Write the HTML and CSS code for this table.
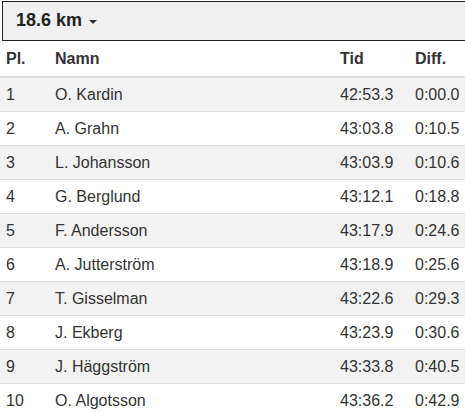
FILE: index.html
```html
<!DOCTYPE html>
<html lang="sv">
<head>
    <meta charset="UTF-8">
    <title>Resultat 18.6 km</title>
    <link rel="stylesheet" href="styles.css">
</head>
<body>
    <div class="results">
        <button class="dist-toggle">18.6 km <span class="caret"></span></button>

        <table class="result-table">
            <thead>
                <tr>
                    <th class="col-pl">Pl.</th>
                    <th class="col-name">Namn</th>
                    <th class="col-time">Tid</th>
                    <th class="col-diff">Diff.</th>
                </tr>
            </thead>
            <tbody>
                <tr><td>1</td><td>O. Kardin</td><td>42:53.3</td><td>0:00.0</td></tr>
                <tr><td>2</td><td>A. Grahn</td><td>43:03.8</td><td>0:10.5</td></tr>
                <tr><td>3</td><td>L. Johansson</td><td>43:03.9</td><td>0:10.6</td></tr>
                <tr><td>4</td><td>G. Berglund</td><td>43:12.1</td><td>0:18.8</td></tr>
                <tr><td>5</td><td>F. Andersson</td><td>43:17.9</td><td>0:24.6</td></tr>
                <tr><td>6</td><td>A. Jutterström</td><td>43:18.9</td><td>0:25.6</td></tr>
                <tr><td>7</td><td>T. Gisselman</td><td>43:22.6</td><td>0:29.3</td></tr>
                <tr><td>8</td><td>J. Ekberg</td><td>43:23.9</td><td>0:30.6</td></tr>
                <tr><td>9</td><td>J. Häggström</td><td>43:33.8</td><td>0:40.5</td></tr>
                <tr><td>10</td><td>O. Algotsson</td><td>43:36.2</td><td>0:42.9</td></tr>
            </tbody>
        </table>
    </div>
</body>
</html>
```

FILE: styles.css
```css
body {
    margin: 0;
    padding: 0;
    background: #ffffff;
    font-family: 'Liberation Sans', Arial, sans-serif;
    font-size: 16px;
    color: #333333;
}

.results {
    width: 465px;
    overflow: hidden;
}

.dist-toggle {
    display: flex;
    align-items: center;
    gap: 7px;
    box-sizing: border-box;
    width: 480px;
    height: 40px;
    margin: 1px 0 0 2px;
    padding: 0 0 1px 13px;
    background: #f0f0f0;
    border: 1px solid #222222;
    font-family: inherit;
    font-size: 18px;
    font-weight: bold;
    color: #222222;
    cursor: pointer;
}

.caret {
    width: 0;
    height: 0;
    border-top: 4px solid #333333;
    border-left: 4px solid transparent;
    border-right: 4px solid transparent;
    margin-top: 2px;
}

.result-table {
    width: 465px;
    table-layout: fixed;
    border-collapse: collapse;
    border-spacing: 0;
}

.result-table th,
.result-table td {
    padding: 7px 4px 6px 6px;
    line-height: 20px;
    text-align: left;
    white-space: nowrap;
}

.result-table th {
    font-weight: bold;
    padding-top: 8px;
    padding-bottom: 7px;
    border-bottom: 2px solid #dddddd;
}

.result-table td {
    border-top: 1px solid #dddddd;
}

.result-table tbody tr:first-child td {
    border-top: 0;
}

.result-table tbody tr:nth-child(odd) {
    background: #f2f2f2;
}

.col-pl {
    width: 39px;
}

.col-time {
    width: 65px;
}

.col-diff {
    width: 46px;
}
```
